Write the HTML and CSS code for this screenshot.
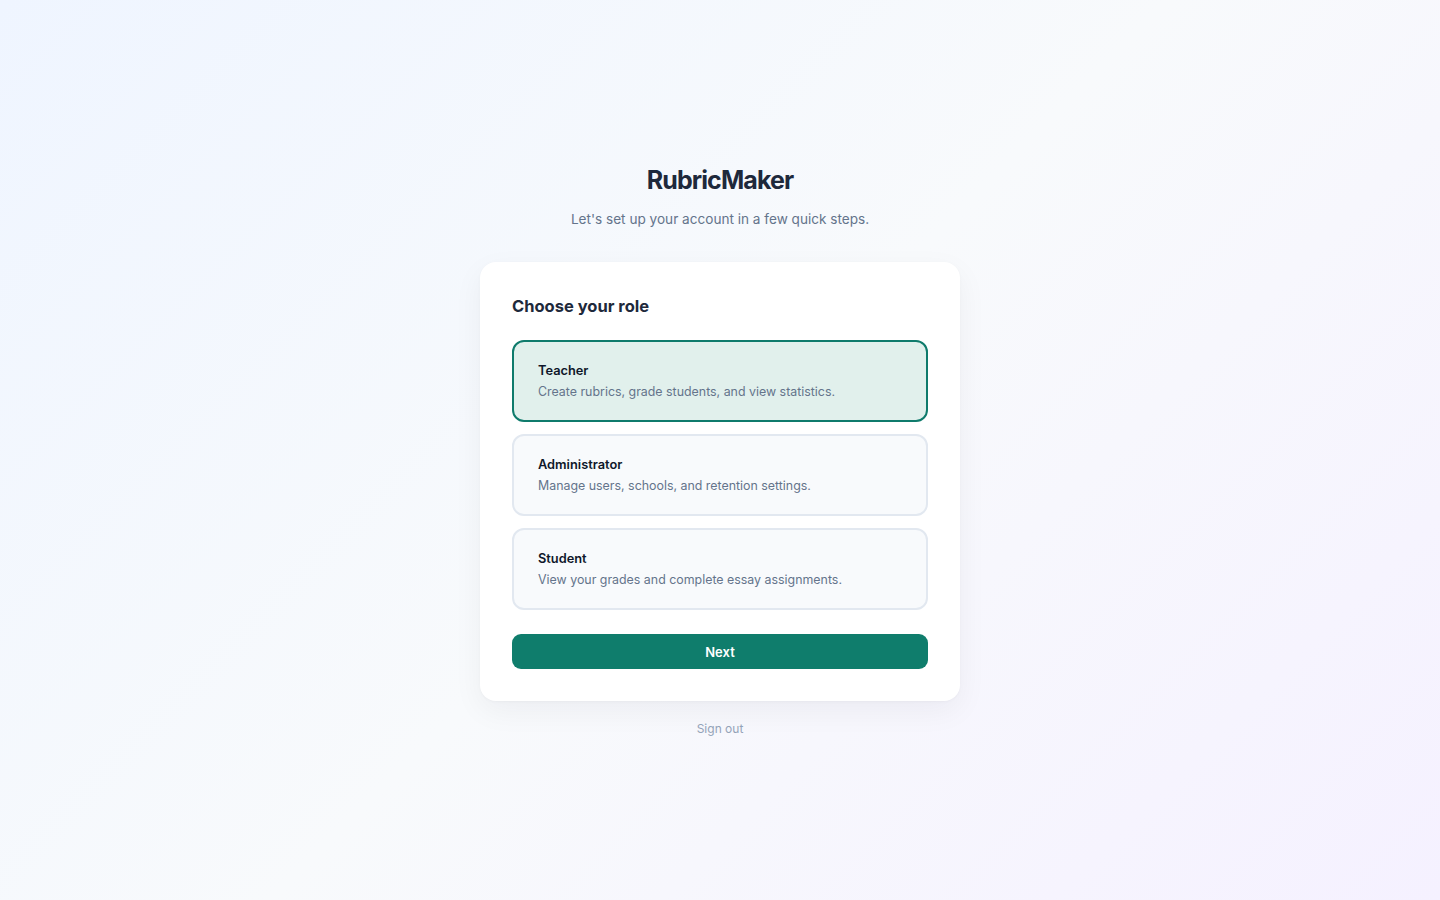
FILE: index.html
```html
<!DOCTYPE html>
<html lang="en">
<head>
<meta charset="utf-8">
<title>RubricMaker – Choose your role</title>
<link rel="stylesheet" href="styles.css">
</head>
<body>
<main class="page">
  <div class="onboard">
    <h1 class="brand">RubricMaker</h1>
    <p class="tagline">Let's set up your account in a few quick steps.</p>
    <section class="card">
      <h2 class="card-title">Choose your role</h2>
      <div class="roles">
        <button class="role role-selected" type="button">
          <span class="role-name">Teacher</span>
          <span class="role-desc">Create rubrics, grade students, and view statistics.</span>
        </button>
        <button class="role" type="button">
          <span class="role-name">Administrator</span>
          <span class="role-desc">Manage users, schools, and retention settings.</span>
        </button>
        <button class="role" type="button">
          <span class="role-name">Student</span>
          <span class="role-desc">View your grades and complete essay assignments.</span>
        </button>
      </div>
      <button class="next" type="button">Next</button>
    </section>
    <a class="signout" href="#">Sign out</a>
  </div>
</main>
</body>
</html>
```

FILE: styles.css
```css
* { box-sizing: border-box; }
html, body { margin: 0; padding: 0; }
body {
  font-family: Inter, "Noto Sans", "Liberation Sans", sans-serif;
  color: #0f172a;
  background: linear-gradient(135deg, #eff5ff 0%, #f8fafc 50%, #f5f1ff 100%);
  min-height: 100vh;
}
.page {
  min-height: 100vh;
  display: flex;
  align-items: flex-start;
  justify-content: center;
  padding-top: 164px;
}
.onboard {
  width: 480px;
  display: flex;
  flex-direction: column;
  align-items: center;
}
.brand {
  margin: 0;
  font-size: 25px;
  line-height: 32px;
  font-weight: 700;
  letter-spacing: -0.9px;
  color: #1e293b;
}
.tagline {
  margin: 13px 0 0;
  font-size: 13.6px;
  line-height: 20px;
  color: #64748b;
}
.card {
  margin-top: 33px;
  width: 480px;
  background: #ffffff;
  border-radius: 16px;
  padding: 32px;
  box-shadow: 0 10px 30px rgba(15, 23, 42, 0.05), 0 1px 3px rgba(15, 23, 42, 0.03);
}
.card-title {
  margin: 0;
  font-size: 16.5px;
  line-height: 24px;
  font-weight: 700;
  color: #1e293b;
}
.roles {
  margin-top: 22px;
  display: flex;
  flex-direction: column;
  gap: 12px;
}
.role {
  display: flex;
  flex-direction: column;
  align-items: flex-start;
  text-align: left;
  width: 100%;
  padding: 19px 24px 18px;
  border: 2px solid #e2e8f0;
  border-radius: 12px;
  background: #f8fafc;
  font-family: inherit;
  cursor: pointer;
}
.role-selected {
  border-color: #0f7b6c;
  background: #e1f0ec;
}
.role-name {
  font-size: 12.8px;
  line-height: 20px;
  font-weight: 600;
  color: #0f172a;
}
.role-desc {
  margin-top: 1px;
  font-size: 12.4px;
  line-height: 20px;
  color: #64748b;
}
.next {
  margin-top: 24px;
  width: 100%;
  height: 35px;
  border: none;
  border-radius: 9px;
  background: #0f7d6c;
  color: #ffffff;
  font-family: inherit;
  font-size: 13px;
  font-weight: 600;
  cursor: pointer;
}
.signout {
  margin-top: 20px;
  font-size: 12px;
  line-height: 16px;
  color: #94a3b8;
  text-decoration: none;
}
```
